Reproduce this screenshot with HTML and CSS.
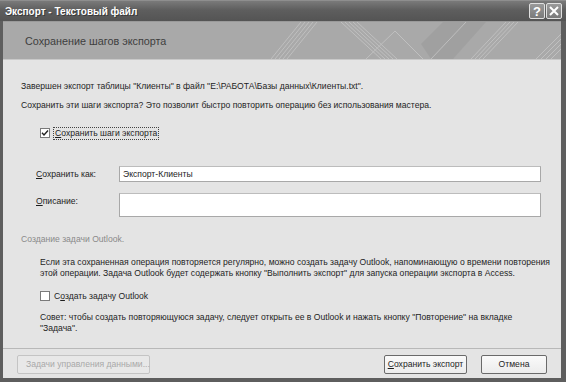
FILE: index.html
```html
<!DOCTYPE html>
<html lang="ru">
<head>
<meta charset="utf-8">
<title>Экспорт - Текстовый файл</title>
<link rel="stylesheet" href="styles.css">
</head>
<body>
<div class="window">
  <div class="titlebar">
    <span class="title">Экспорт - Текстовый файл</span>
    <div class="tbtns">
      <span class="tbtn">?</span>
      <span class="tbtn close">
        <svg width="10" height="10" viewBox="0 0 10 10"><path d="M1 1 L9 9 M9 1 L1 9" stroke="#fff" stroke-width="2"/></svg>
      </span>
    </div>
  </div>
  <div class="client">
    <div class="banner">
      <h1 class="banner-title">Сохранение шагов экспорта</h1>
      <svg class="pattern" width="290" height="37" viewBox="0 0 290 37">
        <path d="M150 22 L172 0 L215 0 L182 37 L160 37 Z" fill="#9d9d9d" opacity="0.7"/>
        <g stroke="#c6c6c6" stroke-width="1" fill="none" opacity="0.8">
          <path d="M0 37 L30 0 M4 37 L34 0 M8 37 L38 0 M12 37 L42 0 M16 37 L46 0"/>
          <path d="M70 0 L110 37 M74 0 L114 37 M78 0 L118 37 M82 0 L122 37 M86 0 L126 37"/>
          <path d="M95 37 L124 9 L152 37"/>
          <path d="M160 37 L195 0"/>
          <path d="M200 37 L235 0 M204 37 L239 0 M208 37 L243 0 M212 37 L247 0"/>
          <path d="M265 37 L290 12 M270 37 L290 17 M275 37 L290 22 M280 37 L290 27"/>
        </g>
      </svg>
    </div>
    <div class="content">
      <p class="line first">Завершен экспорт таблицы "Клиенты" в файл "E:\РАБОТА\Базы данных\Клиенты.txt".</p>
      <p class="line second">Сохранить эти шаги экспорта? Это позволит быстро повторить операцию без использования мастера.</p>
      <label class="check-row save-check">
        <span class="box">
          <svg width="8" height="8" viewBox="0 0 8 8"><path d="M1 3.8 L3 6 L7 1.5" stroke="#222" stroke-width="1.4" fill="none"/></svg>
        </span>
        <span class="focus"><u>С</u>охранить шаги экспорта</span>
      </label>
      <div class="form">
        <span class="flabel"><u>С</u>охранить как:</span>
        <div class="input">Экспорт-Клиенты</div>
        <span class="flabel"><u>О</u>писание:</span>
        <div class="input area"></div>
      </div>
      <p class="section">Создание задачи Outlook.</p>
      <p class="para">Если эта сохраненная операция повторяется регулярно, можно создать задачу Outlook, напоминающую о времени повторения<br>этой операции. Задача Outlook будет содержать кнопку "Выполнить экспорт" для запуска операции экспорта в Access.</p>
      <label class="check-row outlook-check">
        <span class="box"></span>
        <span class="plain">С<u>о</u>здать задачу Outlook</span>
      </label>
      <p class="para tip">Совет: чтобы создать повторяющуюся задачу, следует открыть ее в Outlook и нажать кнопку "Повторение" на вкладке<br>"Задача".</p>
    </div>
    <div class="footer">
      <span class="btn disabled">Задачи управления данными...</span>
      <span class="spacer"></span>
      <span class="btn save"><u>С</u>охранить экспорт</span>
      <span class="btn cancel">Отмена</span>
    </div>
  </div>
</div>
</body>
</html>
```

FILE: styles.css
```css
* { box-sizing: border-box; }
html, body { margin: 0; padding: 0; }
body {
  width: 566px;
  height: 382px;
  overflow: hidden;
  background: #4a4a4a;
  font-family: "Liberation Sans", Arial, sans-serif;
  font-size: 8.6px;
  color: #1e1e1e;
}
.window {
  width: 566px;
  height: 382px;
  display: flex;
  flex-direction: column;
  background: #5e5e5e;
  padding: 0 5px 4px 3px;
}
.titlebar {
  height: 21px;
  flex: none;
  display: flex;
  align-items: center;
  justify-content: space-between;
  background: linear-gradient(#7a7a7a, #5e5e5e 45%, #545454);
  border-top: 1px solid #8e8e8e;
  margin: 0 -5px 0 -3px;
  padding: 0 4px 0 5px;
}
.title {
  color: #fff;
  font-weight: bold;
  font-size: 10px;
  text-shadow: 1px 1px 0 #3a3a3a;
}
.tbtns { display: flex; gap: 1px; }
.tbtn {
  width: 16px;
  height: 16px;
  border: 1px solid #e0e0e0;
  border-radius: 2px;
  background: linear-gradient(#9a9a9a, #7a7a7a);
  color: #fff;
  font-weight: bold;
  font-size: 13px;
  display: flex;
  align-items: center;
  justify-content: center;
  line-height: 1;
}
.client {
  flex: 1;
  min-height: 0;
  display: flex;
  flex-direction: column;
  background: #e4e4e4;
  border-top: 1px solid #9a9a9a;
}
.banner {
  position: relative;
  flex: none;
  height: 38px;
  background: #a9a9a9;
  border-bottom: 1px solid #c9c9c9;
  display: flex;
  align-items: center;
  overflow: hidden;
}
.banner-title {
  margin: 0 0 0 22px;
  font-weight: normal;
  font-size: 10.8px;
  color: #3e3e3e;
  position: relative;
  z-index: 1;
}
.pattern {
  position: absolute;
  right: 0;
  top: 0;
}
.content {
  flex: 1;
  min-height: 0;
  overflow: hidden;
  padding: 0 18px;
}
.line { margin: 0; line-height: 12px; white-space: nowrap; }
.first { margin-top: 20px; }
.second { margin-top: 7px; }
.check-row {
  display: flex;
  align-items: center;
  gap: 3px;
  margin-left: 19px;
  height: 14px;
}
.save-check { margin-top: 15px; }
.box {
  width: 10px;
  height: 10px;
  border: 1px solid #7a7a7a;
  background: #fff;
  display: flex;
  align-items: center;
  justify-content: center;
}
.focus {
  border: 1px dotted #444;
  padding: 0 1px;
  line-height: 11px;
}
.plain { line-height: 12px; padding-left: 1px; }
.form {
  display: grid;
  grid-template-columns: 83px 1fr;
  row-gap: 11px;
  margin: 26px 2px 0 15px;
  align-items: start;
}
.flabel { padding-top: 2px; line-height: 12px; }
.input {
  height: 16px;
  background: #fff;
  border: 1px solid #a8a8a8;
  border-top-color: #bcbcbc;
  padding: 1px 3px;
  line-height: 12px;
}
.input.area { height: 24px; }
.section {
  margin: 16px 0 0 0;
  color: #8a8a8a;
  line-height: 12px;
}
.para {
  margin: 12px 0 0 19px;
  line-height: 10.5px;
  white-space: nowrap;
}
.outlook-check { margin-top: 11px; }
.tip { margin-top: 9px; }
.footer {
  height: 30px;
  flex: none;
  border-top: 1px solid #b8b8b8;
  display: flex;
  align-items: center;
  padding: 1px 14px 0 14px;
  gap: 14px;
}
.spacer { flex: 1; }
.btn {
  height: 19px;
  border: 1px solid #6a6a6a;
  border-radius: 2px;
  background: linear-gradient(#fafafa, #ececec);
  display: flex;
  align-items: center;
  justify-content: center;
  line-height: 1;
  white-space: nowrap;
}
.btn.disabled {
  width: 133px;
  color: #a8a8a8;
  border-color: #c4c4c4;
  background: #e8e8e8;
  justify-content: flex-start;
  padding-left: 8px;
}
.btn.save { width: 83px; }
.btn.cancel { width: 66px; }
```
